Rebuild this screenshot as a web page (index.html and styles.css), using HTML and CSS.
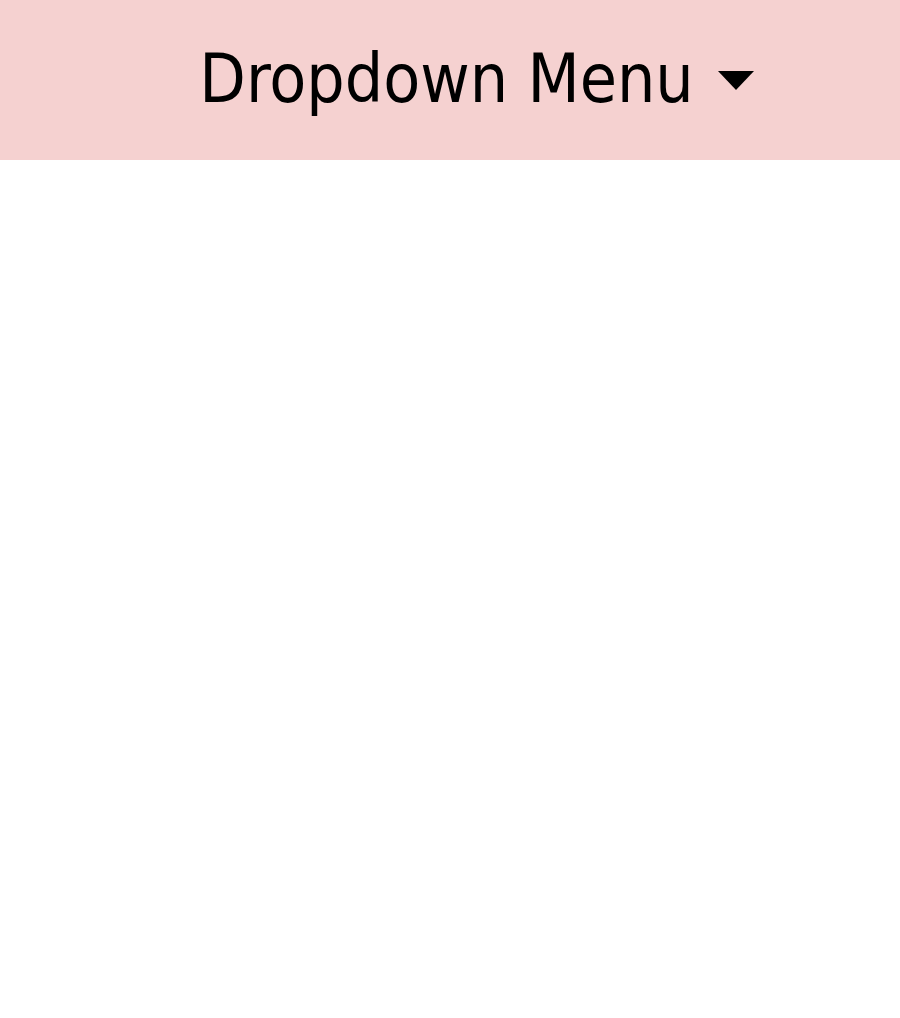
FILE: index.html
```html
<!DOCTYPE html>
<html lang="en">
<head>
<meta charset="utf-8">
<title>Dropdown Menu</title>
<link rel="stylesheet" href="styles.css">
</head>
<body>
<header class="bar">
  <div class="dropdown">
    <span class="title">Dropdown Menu</span>
    <span class="caret"></span>
  </div>
</header>
</body>
</html>
```
FILE: styles.css
```css
html, body {
  margin: 0;
  padding: 0;
  background: #ffffff;
}
.bar {
  height: 160px;
  background: #f5d1d0;
  display: flex;
  justify-content: center;
  align-items: center;
}
.dropdown {
  display: flex;
  align-items: center;
  gap: 24px;
  padding-left: 53px;
  font-family: "DejaVu Sans Condensed", "DejaVu Sans", sans-serif;
  font-size: 67.3px;
  color: #000;
}
.title {
  line-height: 1;
}
.caret {
  width: 0;
  height: 0;
  margin-top: 2px;
  border-left: 18px solid transparent;
  border-right: 18px solid transparent;
  border-top: 19px solid #000;
}
```
